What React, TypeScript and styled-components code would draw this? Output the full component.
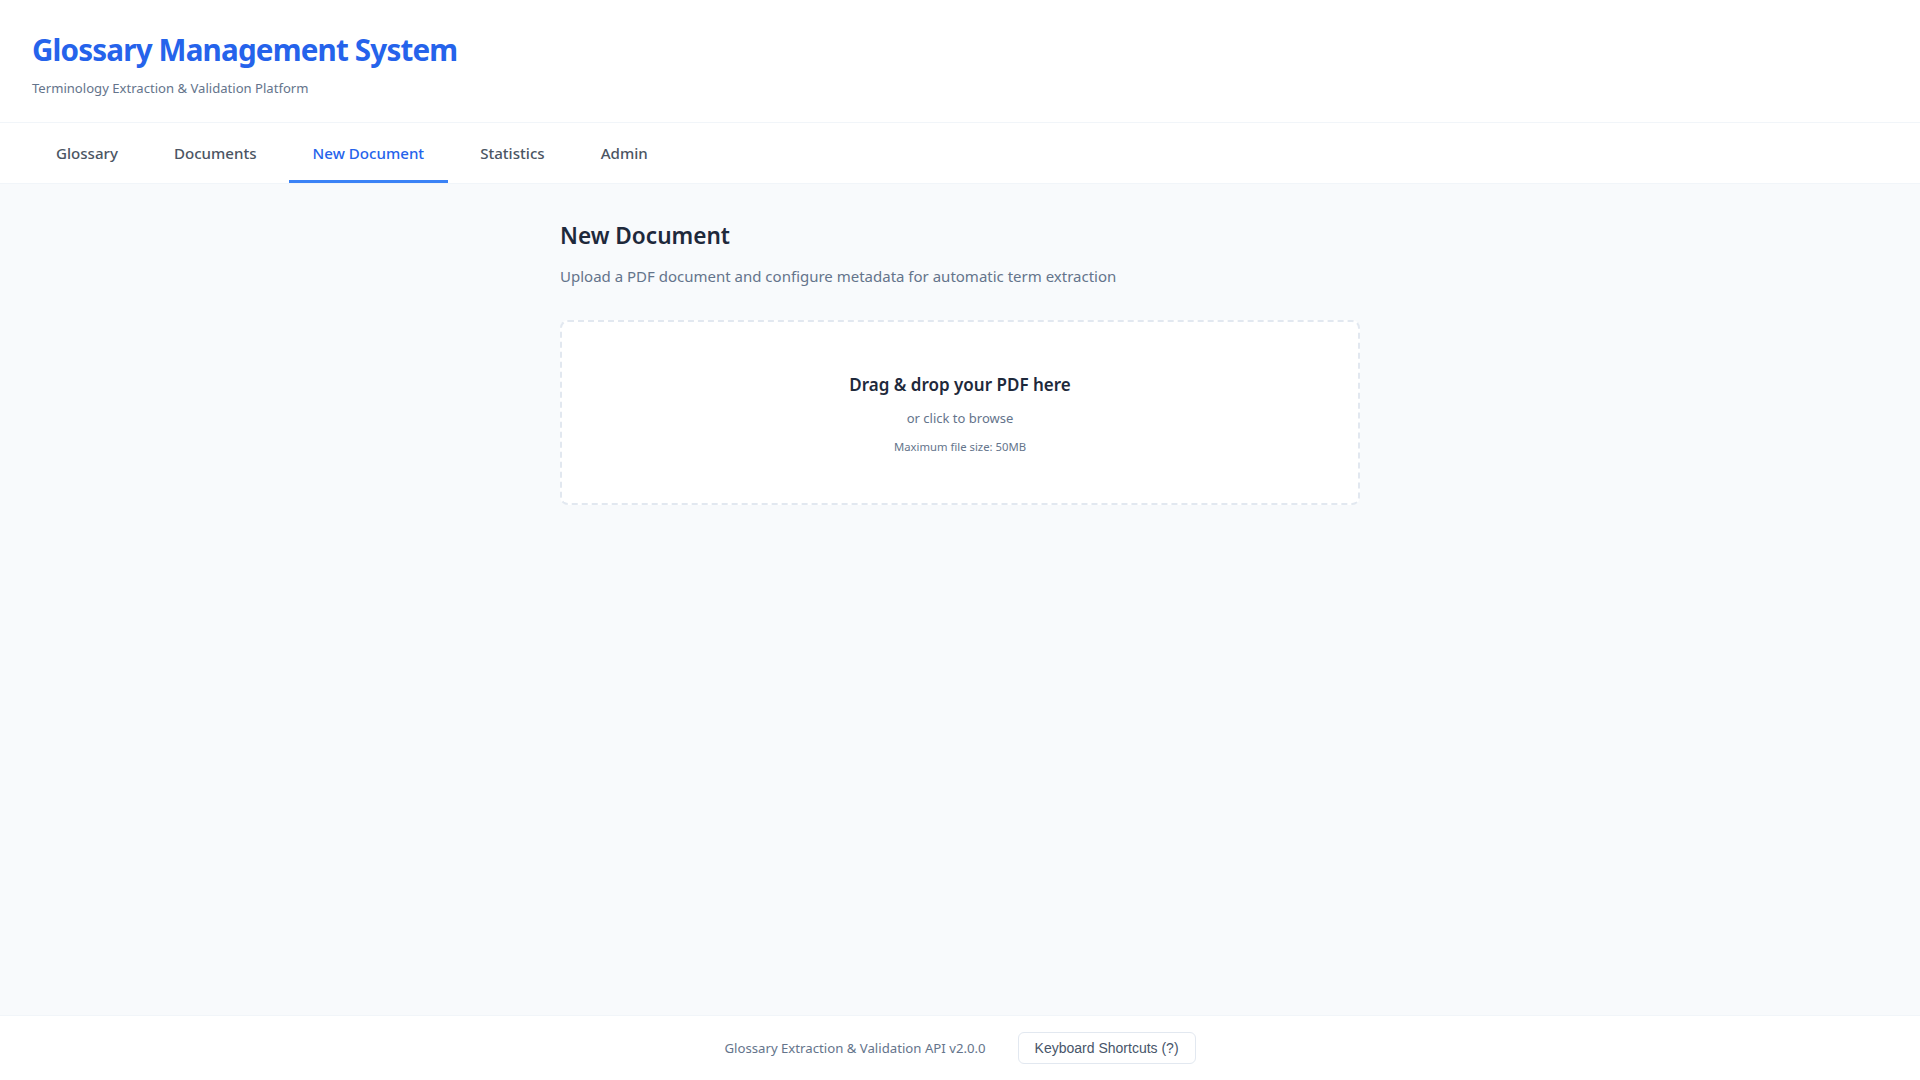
import React from "react";
import styled, { createGlobalStyle } from "styled-components";

const GlobalStyle = createGlobalStyle`
  html, body { margin: 0; padding: 0; }
  body {
    font-family: "Noto Sans", "Open Sans", sans-serif;
    background: #f8fafc;
    color: #1e293b;
  }
  * { box-sizing: border-box; }
`;

const Page = styled.div`
  min-height: 100vh;
  display: flex;
  flex-direction: column;
  background: #f8fafc;
`;

const Header = styled.header`
  background: #ffffff;
  padding: 30px 32px 24px;
  border-bottom: 1px solid #f1f5f9;
`;

const Title = styled.h1`
  margin: 0;
  font-size: 29.6px;
  line-height: 40px;
  font-weight: 700;
  color: #2563eb;
  letter-spacing: -0.82px;
`;

const Subtitle = styled.p`
  margin: 8px 0 0;
  font-size: 13.1px;
  line-height: 20px;
  color: #64748b;
`;

const Nav = styled.nav`
  background: #ffffff;
  display: flex;
  gap: 8px;
  padding: 0 32px;
  height: 61px;
  border-bottom: 1px solid #f1f5f9;
`;

const Tab = styled.button<{ $active?: boolean }>`
  border: none;
  background: transparent;
  font-family: inherit;
  font-size: 15.1px;
  font-weight: 500;
  padding: 3px 24px 0;
  height: 60px;
  cursor: pointer;
  color: ${(p) => (p.$active ? "#2563eb" : "#4b5563")};
  border-bottom: 3px solid ${(p) => (p.$active ? "#3b82f6" : "transparent")};
`;

const Main = styled.main`
  flex: 1;
  padding: 36px 0 32px;
`;

const Content = styled.div`
  max-width: 800px;
  margin: 0 auto;
`;

const Heading = styled.h2`
  margin: 0;
  font-size: 22.6px;
  line-height: 32px;
  font-weight: 600;
  color: #1e293b;
`;

const Lead = styled.p`
  margin: 12px 0 32px;
  font-size: 15px;
  line-height: 24px;
  color: #64748b;
`;

const DropZone = styled.div`
  background: #ffffff;
  border: 2px dashed #e2e8f0;
  border-radius: 8px;
  padding: 50px 24px 48px;
  display: flex;
  flex-direction: column;
  align-items: center;
  cursor: pointer;
`;

const DropTitle = styled.div`
  font-size: 17px;
  line-height: 26px;
  font-weight: 600;
  color: #1e293b;
`;

const DropHint = styled.div`
  margin-top: 10px;
  font-size: 13px;
  line-height: 20px;
  color: #64748b;
`;

const DropNote = styled.div`
  margin-top: 11px;
  font-size: 11.3px;
  line-height: 16px;
  color: #64748b;
`;

const Footer = styled.footer`
  background: #ffffff;
  border-top: 1px solid #f1f5f9;
  padding: 16px;
  display: flex;
  justify-content: center;
  align-items: center;
  gap: 32px;
`;

const FooterText = styled.span`
  font-size: 13.2px;
  color: #64748b;
`;

const ShortcutButton = styled.button`
  height: 32px;
  padding: 0 16px;
  background: #ffffff;
  border: 1px solid #e2e8f0;
  border-radius: 6px;
  font-family: "Liberation Sans", Arial, sans-serif;
  font-size: 14px;
  color: #475569;
  cursor: pointer;
`;

const tabs = ["Glossary", "Documents", "New Document", "Statistics", "Admin"];

export default function App() {
  return (
    <>
      <GlobalStyle />
      <Page>
        <Header>
          <Title>Glossary Management System</Title>
          <Subtitle>Terminology Extraction &amp; Validation Platform</Subtitle>
        </Header>
        <Nav>
          {tabs.map((t) => (
            <Tab key={t} $active={t === "New Document"}>
              {t}
            </Tab>
          ))}
        </Nav>
        <Main>
          <Content>
            <Heading>New Document</Heading>
            <Lead>
              Upload a PDF document and configure metadata for automatic term
              extraction
            </Lead>
            <DropZone>
              <DropTitle>Drag &amp; drop your PDF here</DropTitle>
              <DropHint>or click to browse</DropHint>
              <DropNote>Maximum file size: 50MB</DropNote>
            </DropZone>
          </Content>
        </Main>
        <Footer>
          <FooterText>Glossary Extraction &amp; Validation API v2.0.0</FooterText>
          <ShortcutButton>Keyboard Shortcuts (?)</ShortcutButton>
        </Footer>
      </Page>
    </>
  );
}
